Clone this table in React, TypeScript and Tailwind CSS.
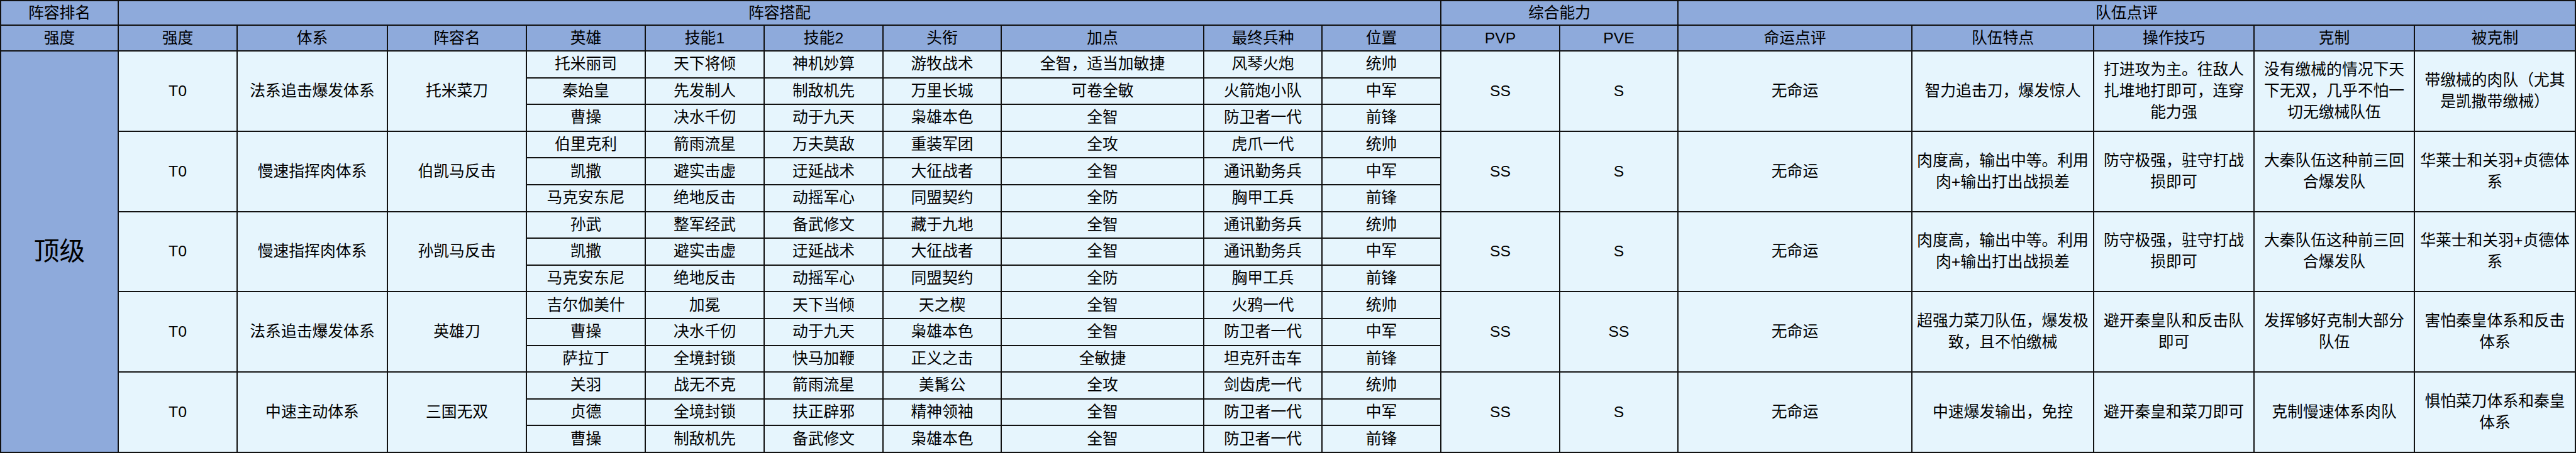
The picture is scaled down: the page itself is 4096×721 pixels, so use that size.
type Hero = [string, string, string, string, string, string, string];

interface Lineup {
  tier: string;
  system: string;
  name: string;
  heroes: Hero[];
  pvp: string;
  pve: string;
  fate: string;
  feature: string;
  tips: string;
  counter: string;
  counteredBy: string;
}

const lineups: Lineup[] = [
  {
    tier: "T0",
    system: "法系追击爆发体系",
    name: "托米菜刀",
    heroes: [
      ["托米丽司", "天下将倾", "神机妙算", "游牧战术", "全智，适当加敏捷", "风琴火炮", "统帅"],
      ["秦始皇", "先发制人", "制敌机先", "万里长城", "可卷全敏", "火箭炮小队", "中军"],
      ["曹操", "决水千仞", "动于九天", "枭雄本色", "全智", "防卫者一代", "前锋"],
    ],
    pvp: "SS",
    pve: "S",
    fate: "无命运",
    feature: "智力追击刀，爆发惊人",
    tips: "打进攻为主。往敌人扎堆地打即可，连穿能力强",
    counter: "没有缴械的情况下天下无双，几乎不怕一切无缴械队伍",
    counteredBy: "带缴械的肉队（尤其是凯撒带缴械）",
  },
  {
    tier: "T0",
    system: "慢速指挥肉体系",
    name: "伯凯马反击",
    heroes: [
      ["伯里克利", "箭雨流星", "万夫莫敌", "重装军团", "全攻", "虎爪一代", "统帅"],
      ["凯撒", "避实击虚", "迂延战术", "大征战者", "全智", "通讯勤务兵", "中军"],
      ["马克安东尼", "绝地反击", "动摇军心", "同盟契约", "全防", "胸甲工兵", "前锋"],
    ],
    pvp: "SS",
    pve: "S",
    fate: "无命运",
    feature: "肉度高，输出中等。利用肉+输出打出战损差",
    tips: "防守极强，驻守打战损即可",
    counter: "大秦队伍这种前三回合爆发队",
    counteredBy: "华莱士和关羽+贞德体系",
  },
  {
    tier: "T0",
    system: "慢速指挥肉体系",
    name: "孙凯马反击",
    heroes: [
      ["孙武", "整军经武", "备武修文", "藏于九地", "全智", "通讯勤务兵", "统帅"],
      ["凯撒", "避实击虚", "迂延战术", "大征战者", "全智", "通讯勤务兵", "中军"],
      ["马克安东尼", "绝地反击", "动摇军心", "同盟契约", "全防", "胸甲工兵", "前锋"],
    ],
    pvp: "SS",
    pve: "S",
    fate: "无命运",
    feature: "肉度高，输出中等。利用肉+输出打出战损差",
    tips: "防守极强，驻守打战损即可",
    counter: "大秦队伍这种前三回合爆发队",
    counteredBy: "华莱士和关羽+贞德体系",
  },
  {
    tier: "T0",
    system: "法系追击爆发体系",
    name: "英雄刀",
    heroes: [
      ["吉尔伽美什", "加冕", "天下当倾", "天之楔", "全智", "火鸦一代", "统帅"],
      ["曹操", "决水千仞", "动于九天", "枭雄本色", "全智", "防卫者一代", "中军"],
      ["萨拉丁", "全境封锁", "快马加鞭", "正义之击", "全敏捷", "坦克歼击车", "前锋"],
    ],
    pvp: "SS",
    pve: "SS",
    fate: "无命运",
    feature: "超强力菜刀队伍，爆发极致，且不怕缴械",
    tips: "避开秦皇队和反击队即可",
    counter: "发挥够好克制大部分队伍",
    counteredBy: "害怕秦皇体系和反击体系",
  },
  {
    tier: "T0",
    system: "中速主动体系",
    name: "三国无双",
    heroes: [
      ["关羽", "战无不克", "箭雨流星", "美髯公", "全攻", "剑齿虎一代", "统帅"],
      ["贞德", "全境封锁", "扶正辟邪", "精神领袖", "全智", "防卫者一代", "中军"],
      ["曹操", "制敌机先", "备武修文", "枭雄本色", "全智", "防卫者一代", "前锋"],
    ],
    pvp: "SS",
    pve: "S",
    fate: "无命运",
    feature: "中速爆发输出，免控",
    tips: "避开秦皇和菜刀即可",
    counter: "克制慢速体系肉队",
    counteredBy: "惧怕菜刀体系和秦皇体系",
  },
];

const headers = [
  "强度", "强度", "体系", "阵容名", "英雄", "技能1", "技能2", "头衔", "加点",
  "最终兵种", "位置", "PVP", "PVE", "命运点评", "队伍特点", "操作技巧", "克制", "被克制",
];

const cell =
  "flex items-center justify-center text-center border-r-2 border-b-2 border-[#111] px-[5px] leading-[34px]";
const head = cell + " bg-[#8eaadb]";
const body = cell + " bg-[#e6f5fd]";

function Group({ g }: { g: Lineup }) {
  const [first, ...rest] = g.heroes;
  return (
    <>
      <div className={`${body} row-span-3`}>{g.tier}</div>
      <div className={`${body} row-span-3`}>{g.system}</div>
      <div className={`${body} row-span-3`}>{g.name}</div>
      {first.map((v, i) => (
        <div key={"a" + i} className={body}>{v}</div>
      ))}
      <div className={`${body} row-span-3`}>{g.pvp}</div>
      <div className={`${body} row-span-3`}>{g.pve}</div>
      <div className={`${body} row-span-3`}>{g.fate}</div>
      <div className={`${body} row-span-3`}>{g.feature}</div>
      <div className={`${body} row-span-3`}>{g.tips}</div>
      <div className={`${body} row-span-3`}>{g.counter}</div>
      <div className={`${body} row-span-3`}>{g.counteredBy}</div>
      {rest.map((row, r) =>
        row.map((v, i) => (
          <div key={r + "-" + i} className={body}>{v}</div>
        ))
      )}
    </>
  );
}

export default function App() {
  return (
    <div className="w-[4096px] h-[721px] overflow-hidden bg-white text-black text-[24.8px] font-['Liberation_Sans','Noto_Sans_CJK_SC',sans-serif]">
      <div className="grid grid-cols-[189px_189px_239px_221px_189px_189px_189px_188px_322px_188px_189px_189px_188px_372px_289px_255px_255px_256px] grid-rows-[41px_41px_repeat(15,42.6px)]">
        {/* 第一行表头 */}
        <div className={`${head} border-t-2 border-l-2`}>阵容排名</div>
        <div className={`${head} border-t-2 col-span-10`}>阵容搭配</div>
        <div className={`${head} border-t-2 col-span-2`}>综合能力</div>
        <div className={`${head} border-t-2 col-span-5`}>队伍点评</div>

        {/* 第二行表头 */}
        {headers.map((h, i) => (
          <div key={i} className={i === 0 ? `${head} border-l-2` : head}>{h}</div>
        ))}

        <div className={`${head} border-l-2 row-span-15 text-[40.7px]`}>顶级</div>

        {lineups.map((g, i) => (
          <Group key={i} g={g} />
        ))}
      </div>
    </div>
  );
}
